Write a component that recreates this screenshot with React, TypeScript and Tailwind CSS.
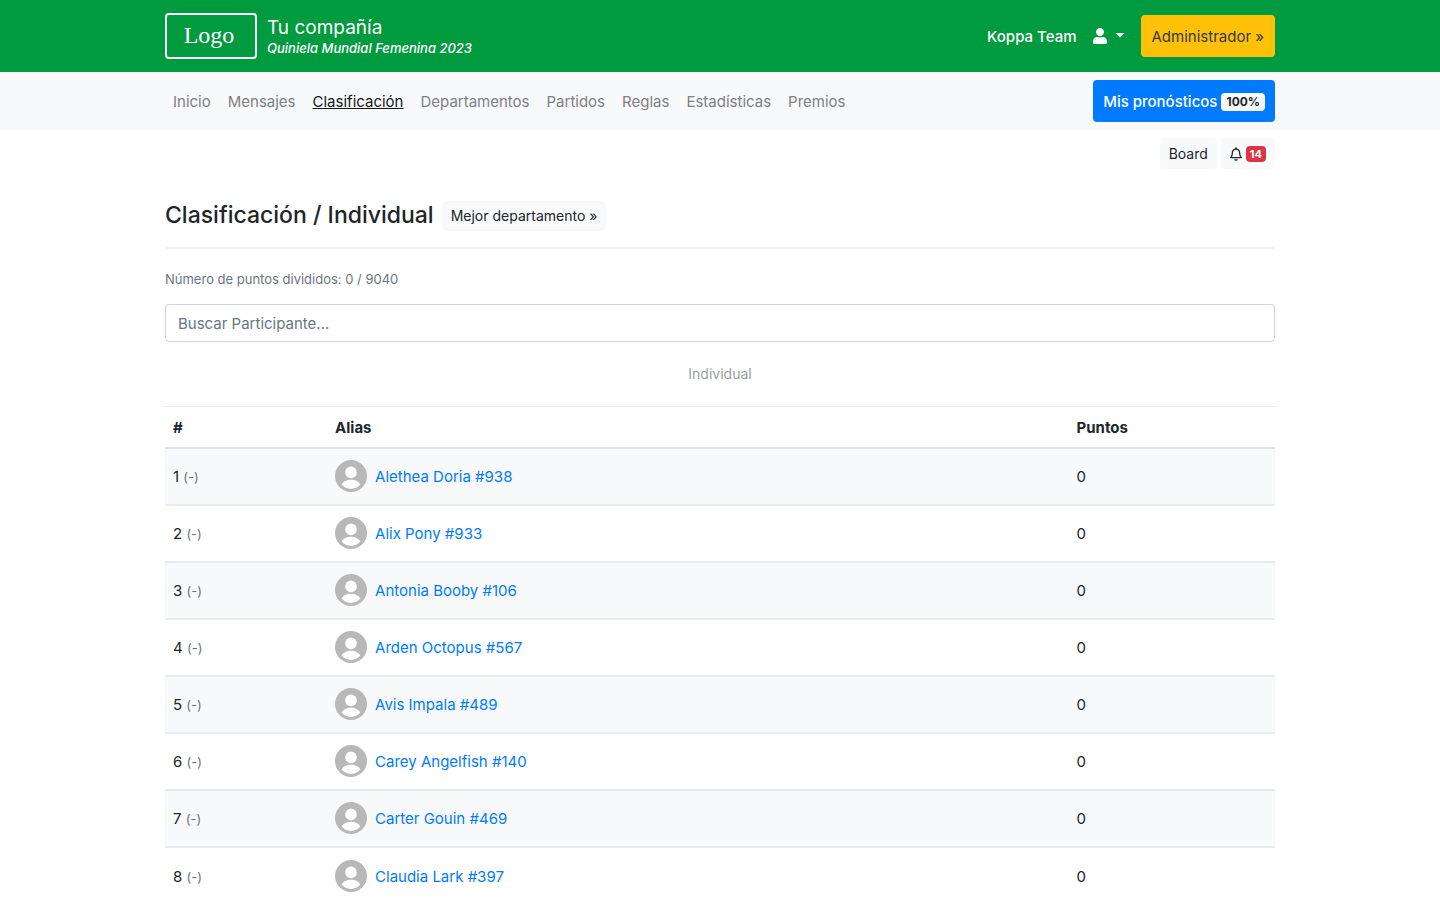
import { useState } from 'react';
import { FaUser, FaRegBell } from 'react-icons/fa';

const links = [
  'Inicio',
  'Mensajes',
  'Clasificación',
  'Departamentos',
  'Partidos',
  'Reglas',
  'Estadísticas',
  'Premios',
];

const players = [
  { rank: 1, alias: 'Alethea Doria #938', points: 0 },
  { rank: 2, alias: 'Alix Pony #933', points: 0 },
  { rank: 3, alias: 'Antonia Booby #106', points: 0 },
  { rank: 4, alias: 'Arden Octopus #567', points: 0 },
  { rank: 5, alias: 'Avis Impala #489', points: 0 },
  { rank: 6, alias: 'Carey Angelfish #140', points: 0 },
  { rank: 7, alias: 'Carter Gouin #469', points: 0 },
  { rank: 8, alias: 'Claudia Lark #397', points: 0 },
];

function Avatar() {
  return (
    <svg viewBox="0 0 32 32" className="size-8 shrink-0" aria-hidden="true">
      <circle cx="16" cy="16" r="16" fill="#b8b8b8" />
      <circle cx="16" cy="12.4" r="5.8" fill="#fff" />
      <path d="M6.6 24.6C8 21.4 12 19.7 16 19.7s8 1.7 9.4 4.9C23.2 27.4 19.8 29 16 29s-7.2-1.6-9.4-4.4z" fill="#fff" />
    </svg>
  );
}

function Header() {
  return (
    <header className="bg-[#009b3e] text-white">
      <div className="mx-auto flex h-18 max-w-[1140px] items-center justify-between px-[15px]">
        <a href="#" className="flex items-center gap-2.5">
          <span className="flex h-[46px] w-[92px] items-center justify-center rounded border-2 border-white pr-1 pb-0.5 font-['Liberation_Serif',serif] text-2xl">
            Logo
          </span>
          <span className="flex flex-col">
            <span className="text-[19px] leading-6">Tu compañía</span>
            <em className="text-[13px] leading-4 font-medium">Quiniela Mundial Femenina 2023</em>
          </span>
        </a>
        <div className="flex items-center">
          <a href="#" className="pt-0.5 font-medium">Koppa Team</a>
          <button type="button" aria-label="Cuenta" className="mx-4 flex items-center gap-2">
            <FaUser className="h-4 w-3.5" />
            <svg viewBox="0 0 10 5" className="mb-0.5 h-[5px] w-2.5" aria-hidden="true">
              <path d="M0.5 0h9L5 4.5z" fill="currentColor" />
            </svg>
          </button>
          <a href="#" className="flex h-[42px] items-center rounded bg-[#ffc107] px-[11px] pt-0.5 text-[#343a40]">
            Administrador »
          </a>
        </div>
      </div>
    </header>
  );
}

function Nav() {
  return (
    <nav className="bg-[#f8f9fb]">
      <div className="mx-auto flex h-[58px] max-w-[1140px] items-center justify-between px-[15px]">
        <ul className="flex gap-[17px] px-2 pt-0.5">
          {links.map((l) => (
            <li key={l}>
              <a href="#" className={l === 'Clasificación' ? 'text-[#191919] underline' : 'text-[#7f8081]'}>
                {l}
              </a>
            </li>
          ))}
        </ul>
        <a href="#" className="flex h-[42px] items-center gap-1 rounded bg-[#007bff] px-2.5 pt-0.5 font-medium text-white">
          Mis pronósticos
          <span className="rounded bg-[#f8f9fa] px-[5px] text-xs leading-[18px] font-bold text-[#212529]">100%</span>
        </a>
      </div>
    </nav>
  );
}

export default function App() {
  const [search, setSearch] = useState('');
  const rows = players.filter((p) => p.alias.toLowerCase().includes(search.toLowerCase()));

  return (
    <div className="bg-white font-['Inter',sans-serif] text-[15px] leading-6 text-[#212529]">
      <Header />
      <Nav />
      <main className="mx-auto max-w-[1140px] px-[15px]">
        <div className="flex justify-end gap-1 pt-2">
          <a href="#" className="flex h-[31px] items-center rounded-sm bg-[#f8f9fa] px-[9px] text-sm">
            Board
          </a>
          <button type="button" aria-label="Notificaciones" className="flex h-[31px] items-center gap-1 rounded-sm bg-[#f8f9fa] px-[9px]">
            <FaRegBell className="h-3.5 w-3" />
            <span className="rounded bg-[#dc3545] px-1 text-[11px] leading-4 font-bold text-white">14</span>
          </button>
        </div>

        <div className="mt-8 flex items-center gap-2 border-b-2 border-[#f0f0f0] pb-4">
          <h1 className="pb-0.5 text-[23px] leading-7 font-medium">Clasificación / Individual</h1>
          <a href="#" className="flex h-[30px] items-center rounded-sm bg-[#f8f9fa] px-[9px] text-sm">
            Mejor departamento »
          </a>
        </div>

        <p className="mt-5 text-[13px] leading-5 text-[#6c757d]">Número de puntos divididos: 0 / 9040</p>

        <input
          type="text"
          aria-label="Buscar Participante"
          placeholder="Buscar Participante..."
          value={search}
          onChange={(e) => setSearch(e.target.value)}
          className="mt-[15px] block h-[38px] w-full rounded border border-[#ced4da] px-3 placeholder:text-[#6c757d]"
        />

        <p className="mt-5 mb-5 text-center text-sm leading-6 text-[#9a9fa4]">Individual</p>

        <table className="w-full table-fixed text-left">
          <thead>
            <tr className="h-[41px] border-t border-b-2 border-t-[#e9ecef] border-b-[#dee2e6]">
              <th className="w-[14.6%] px-2 pt-0.5 font-bold">#</th>
              <th className="w-[66.8%] px-2 pt-0.5 font-bold">Alias</th>
              <th className="px-2 pt-0.5 font-bold">Puntos</th>
            </tr>
          </thead>
          <tbody>
            {rows.map((p) => (
              <tr key={p.rank} className="h-[57px] border-t-2 border-[#e9ecef] odd:bg-[#f8f9fb]">
                <td className="px-2 pt-0.5">
                  {p.rank} <small className="text-[13px] text-[#6c757d]">(-)</small>
                </td>
                <td className="px-2">
                  <a href="#" className="flex items-center gap-2 text-[#007bff]">
                    <Avatar />
                    <span className="pt-0.5">{p.alias}</span>
                  </a>
                </td>
                <td className="px-2 pt-0.5">{p.points}</td>
              </tr>
            ))}
          </tbody>
        </table>
      </main>
    </div>
  );
}
